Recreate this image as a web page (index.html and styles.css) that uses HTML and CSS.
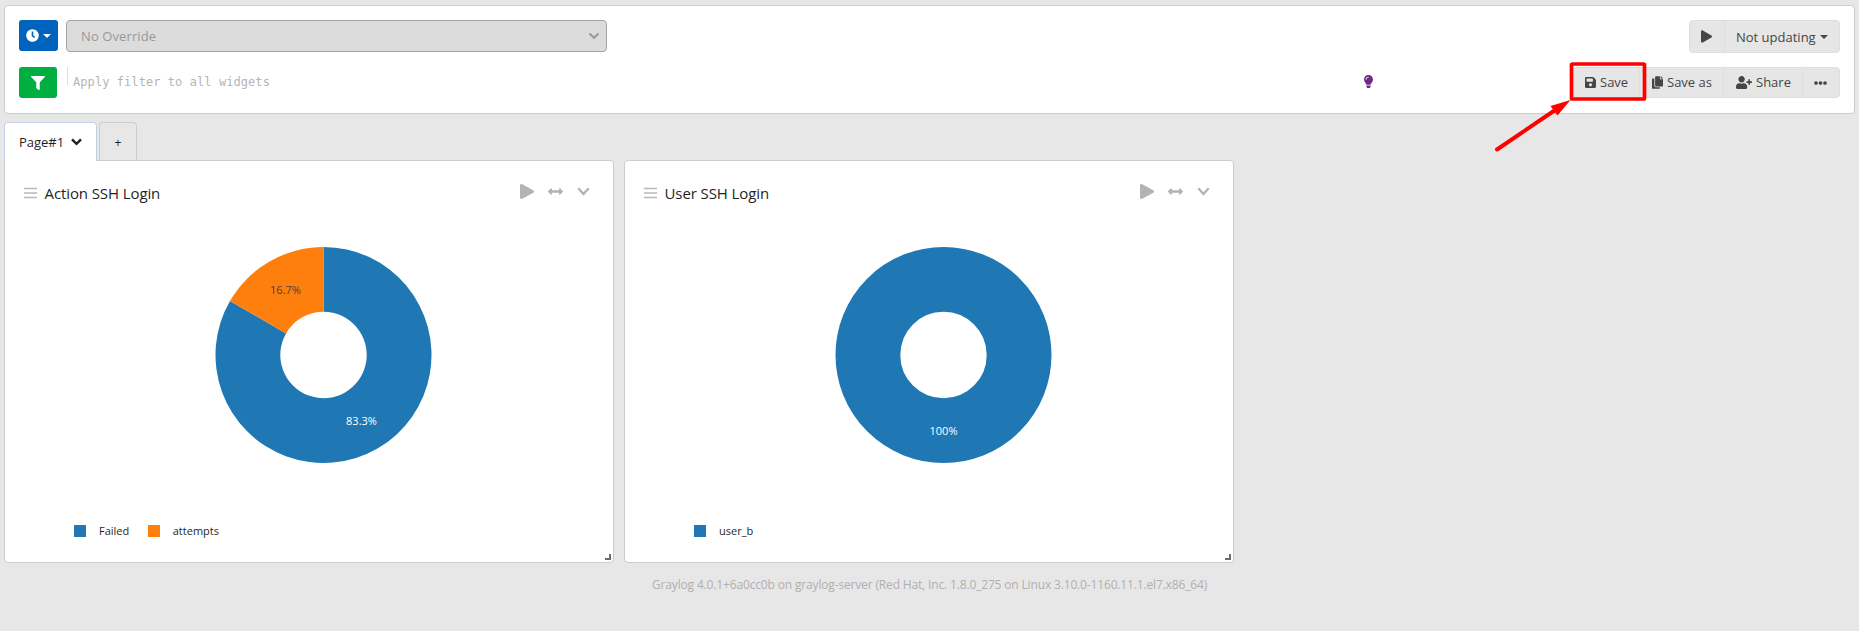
FILE: index.html
```html
<!DOCTYPE html>
<html lang="en">
<head>
<meta charset="utf-8">
<title>Graylog dashboard</title>
<link rel="stylesheet" href="styles.css">
</head>
<body>
<header class="toolbar">
  <div class="row">
    <button class="btn btn-time"><svg width="13" height="13" viewBox="0 0 512 512"><path fill="currentColor" d="M256,8C119,8,8,119,8,256S119,504,256,504,504,393,504,256,393,8,256,8Zm92.49,313h0l-20,25a16,16,0,0,1-22.49,2.5h0l-67-49.72a40,40,0,0,1-15-31.23V112a16,16,0,0,1,16-16h32a16,16,0,0,1,16,16V256l58,42.5A16,16,0,0,1,348.49,321Z"/></svg><span class="caret"></span></button>
    <div class="select"><span>No Override</span><svg width="12" height="8" viewBox="0 0 12 8"><path d="M1.5 1.5 6 5.8l4.500-4.300" fill="none" stroke="#999" stroke-width="2"/></svg></div>
    <div class="group group-refresh">
      <button class="seg seg-play"><svg width="11" height="13" viewBox="0 0 448 512"><path fill="currentColor" d="M424.4 214.7L72.4 6.6C43.8-10.3 0 6.1 0 47.9V464c0 37.5 40.7 60.1 72.4 41.3l352-208c31.4-18.5 31.5-64.1 0-82.6z"/></svg></button>
      <button class="seg seg-rate">Not updating<span class="caret"></span></button>
    </div>
  </div>
  <div class="row">
    <button class="btn btn-filter"><svg width="14" height="14" viewBox="0 0 512 512"><path fill="currentColor" d="M487.976 0H24.028C2.71 0-8.047 25.866 7.058 40.971L192 225.941V432c0 7.831 3.821 15.17 10.237 19.662l80 55.98C298.02 518.69 320 507.493 320 487.98V225.941l184.947-184.97C520.021 25.896 509.338 0 487.976 0z"/></svg></button>
    <div class="query"><span>Apply filter to all widgets</span></div>
    <svg class="bulb" width="9" height="13" viewBox="0 0 352 512"><path fill="#702785" d="M96.06 454.35c.01 6.29 1.87 12.45 5.36 17.69l17.09 25.69a31.99 31.99 0 0 0 26.64 14.28h61.71a31.99 31.99 0 0 0 26.64-14.28l17.09-25.69a31.989 31.989 0 0 0 5.36-17.69l.04-38.35H96.01l.05 38.35zM0 176c0 44.37 16.45 84.85 43.56 115.78 16.52 18.85 42.36 58.23 52.21 91.45.04.26.07.52.11.78h160.24c.04-.26.07-.51.11-.78 9.85-33.22 35.69-72.6 52.21-91.45C335.55 260.85 352 220.37 352 176 352 78.61 272.91-.3 175.45 0 73.44.31 0 82.97 0 176zm176-80c-44.11 0-80 35.89-80 80 0 8.84-7.16 16-16 16s-16-7.16-16-16c0-61.76 50.24-112 112-112 8.84 0 16 7.16 16 16s-7.16 16-16 16z"/></svg>
    <div class="group group-actions">
      <button class="seg seg-save"><svg width="11" height="13" viewBox="0 0 448 512"><path fill="currentColor" d="M433.941 129.941l-83.882-83.882A48 48 0 0 0 316.118 32H48C21.49 32 0 53.49 0 80v352c0 26.51 21.49 48 48 48h352c26.51 0 48-21.49 48-48V163.882a48 48 0 0 0-14.059-33.941zM224 416c-35.346 0-64-28.654-64-64 0-35.346 28.654-64 64-64s64 28.654 64 64c0 35.346-28.654 64-64 64zm96-304.52V212c0 6.627-5.373 12-12 12H76c-6.627 0-12-5.373-12-12V108c0-6.627 5.373-12 12-12h228.52c3.183 0 6.235 1.264 8.485 3.515l3.48 3.48A11.996 11.996 0 0 1 320 111.48z"/></svg><span>Save</span></button>
      <button class="seg seg-saveas"><svg width="11" height="13" viewBox="0 0 448 512"><path fill="currentColor" d="M320 448v40c0 13.255-10.745 24-24 24H24c-13.255 0-24-10.745-24-24V120c0-13.255 10.745-24 24-24h72v296c0 30.879 25.121 56 56 56h168zm0-344V0H152c-13.255 0-24 10.745-24 24v368c0 13.255 10.745 24 24 24h272c13.255 0 24-10.745 24-24V128H344c-13.2 0-24-10.800-24-24zm120.971-31.029L375.029 7.029A24 24 0 0 0 358.059 0H352v96h96v-6.059a24 24 0 0 0-7.029-16.97z"/></svg><span>Save as</span></button>
      <button class="seg seg-share"><svg width="16" height="13" viewBox="0 0 640 512"><path fill="currentColor" d="M624 208h-64v-64c0-8.800-7.200-16-16-16h-32c-8.800 0-16 7.200-16 16v64h-64c-8.800 0-16 7.200-16 16v32c0 8.800 7.200 16 16 16h64v64c0 8.800 7.200 16 16 16h32c8.800 0 16-7.200 16-16v-64h64c8.800 0 16-7.200 16-16v-32c0-8.800-7.200-16-16-16zm-400 48c70.700 0 128-57.300 128-128S294.700 0 224 0 96 57.300 96 128s57.300 128 128 128zm89.600 32h-16.700c-22.200 10.200-46.900 16-72.900 16s-50.600-5.800-72.900-16h-16.700C60.200 288 0 348.200 0 422.400V464c0 26.500 21.500 48 48 48h352c26.500 0 48-21.500 48-48v-41.600c0-74.200-60.200-134.400-134.400-134.400z"/></svg><span>Share</span></button>
      <button class="seg seg-more"><svg width="13" height="4" viewBox="0 0 13 4"><g fill="currentColor"><circle cx="2" cy="2" r="1.850"/><circle cx="6.500" cy="2" r="1.850"/><circle cx="11" cy="2" r="1.850"/></g></svg></button>
    </div>
  </div>
</header>

<nav class="tabs">
  <div class="tab tab-active">Page#1<svg width="11" height="8" viewBox="0 0 11 8"><path d="M1 1.300 5.500 5.800 10 1.300" fill="none" stroke="#1f1f1f" stroke-width="2.400"/></svg></div>
  <div class="tab tab-add">+</div>
</nav>

<main class="widgets">
  <section class="card">
    <div class="card-head">
      <svg class="drag" width="13" height="12" viewBox="0 0 13 12"><path d="M0 1.500h13M0 6h13M0 10.500h13" stroke="#b8b8b8" stroke-width="1.500"/></svg>
      <h2>Action SSH Login</h2>
      <div class="tools">
        <svg width="14" height="15" viewBox="0 0 448 512" preserveAspectRatio="none"><path fill="#b3b3b3" d="M424.400 214.700L72.400 6.600C43.800-10.300 0 6.100 0 47.900V464c0 37.500 40.700 60.100 72.400 41.300l352-208c31.400-18.500 31.500-64.100 0-82.600z"/></svg>
        <svg width="15" height="15" viewBox="0 0 512 512"><path fill="#b3b3b3" d="M377.941 169.941V216H134.059v-46.059c0-21.382-25.851-32.090-40.971-16.971L7.029 239.029c-9.373 9.373-9.373 24.568 0 33.941l86.059 86.059c15.119 15.119 40.971 4.411 40.971-16.971V296h243.882v46.059c0 21.382 25.851 32.090 40.971 16.971l86.059-86.059c9.373-9.373 9.373-24.568 0-33.941l-86.059-86.059c-15.119-15.120-40.971-4.412-40.971 16.970z"/></svg>
        <svg width="13" height="9" viewBox="0 0 13 9"><path d="M1.300 1.300 6.500 7 11.700 1.300" fill="none" stroke="#b3b3b3" stroke-width="2.300"/></svg>
      </div>
    </div>
    <svg class="chart" width="218" height="218" viewBox="-108.500 -109 218 218">
      <path fill="#1f77b4" d="M0-108A108 108 0 1 1-93.530-54L-37.410-21.600A43.200 43.200 0 1 0 0-43.200Z"/>
      <path fill="#ff7f0e" d="M0-108A108 108 0 0 0-93.530-54L-37.410-21.600A43.200 43.200 0 0 1 0-43.200Z"/>
      <text x="-38" y="-61" fill="#444">16.7%</text>
      <text class="on-dark" x="38" y="70">83.3%</text>
    </svg>
    <div class="legend">
      <span class="key key-blue">Failed</span>
      <span class="key key-orange">attempts</span>
    </div>
    <svg class="grip" width="6" height="6" viewBox="0 0 6 6"><path d="M5 0v5H0" fill="none" stroke="#6b6b6b" stroke-width="2"/></svg>
  </section>
  <section class="card">
    <div class="card-head">
      <svg class="drag" width="13" height="12" viewBox="0 0 13 12"><path d="M0 1.500h13M0 6h13M0 10.500h13" stroke="#b8b8b8" stroke-width="1.500"/></svg>
      <h2>User SSH Login</h2>
      <div class="tools">
        <svg width="14" height="15" viewBox="0 0 448 512" preserveAspectRatio="none"><path fill="#b3b3b3" d="M424.400 214.700L72.400 6.600C43.800-10.300 0 6.100 0 47.900V464c0 37.500 40.700 60.100 72.400 41.300l352-208c31.400-18.500 31.500-64.100 0-82.600z"/></svg>
        <svg width="15" height="15" viewBox="0 0 512 512"><path fill="#b3b3b3" d="M377.941 169.941V216H134.059v-46.059c0-21.382-25.851-32.090-40.971-16.971L7.029 239.029c-9.373 9.373-9.373 24.568 0 33.941l86.059 86.059c15.119 15.119 40.971 4.411 40.971-16.971V296h243.882v46.059c0 21.382 25.851 32.090 40.971 16.971l86.059-86.059c9.373-9.373 9.373-24.568 0-33.941l-86.059-86.059c-15.119-15.120-40.971-4.412-40.971 16.970z"/></svg>
        <svg width="13" height="9" viewBox="0 0 13 9"><path d="M1.300 1.300 6.500 7 11.700 1.300" fill="none" stroke="#b3b3b3" stroke-width="2.300"/></svg>
      </div>
    </div>
    <svg class="chart" width="218" height="218" viewBox="-108.500 -109 218 218">
      <circle r="75.600" fill="none" stroke="#1f77b4" stroke-width="64.800"/>
      <text class="on-dark" x="0" y="80">100%</text>
    </svg>
    <div class="legend">
      <span class="key key-blue">user_b</span>
    </div>
    <svg class="grip" width="6" height="6" viewBox="0 0 6 6"><path d="M5 0v5H0" fill="none" stroke="#6b6b6b" stroke-width="2"/></svg>
  </section>
</main>

<footer class="footer">Graylog 4.0.1+6a0cc0b on graylog-server (Red Hat, Inc. 1.8.0_275 on Linux 3.10.0-1160.11.1.el7.x86_64)</footer>

<svg class="callout" width="156" height="96" viewBox="1494 58 156 96">
  <rect x="1571.500" y="64" width="73" height="35" rx="1" fill="none" stroke="#f00" stroke-width="3.700"/>
  <path d="M1497 149.500 1556 109.500" stroke="#f00" stroke-width="4" stroke-linecap="round"/>
  <path d="M1570.500 100 1550.500 106 1557.500 115.500Z" fill="#f00"/>
</svg>
</body>
</html>
```
FILE: styles.css
```css
* { box-sizing: border-box; }

body {
  margin: 0;
  padding: 5px 4px 0;
  height: 631px;
  overflow: hidden;
  background: #e7e7e7;
  color: #1f1f1f;
  font: 13px/20px "Open Sans", sans-serif;
}

svg { display: block; flex: none; }

button {
  margin: 0;
  font: inherit;
  color: inherit;
}

.toolbar {
  display: flex;
  flex-direction: column;
  gap: 14px;
  height: 109px;
  padding: 14px;
  background: #fff;
  border: 1px solid #cdcdcd;
  border-radius: 4px;
}

.row { display: flex; align-items: flex-start; height: 33px; }

.caret {
  border: 4px solid transparent;
  border-top-color: currentColor;
  border-bottom: 0;
}

.btn {
  display: flex;
  align-items: center;
  justify-content: center;
  height: 31px;
  padding: 0;
  border: 0;
  border-radius: 3px;
  color: #fff;
}

.btn-time { width: 39px; gap: 4px; background: #0063be; }
.btn-filter { width: 38px; background: #00ae42; }

.select {
  display: flex;
  align-items: center;
  justify-content: space-between;
  width: 541px;
  height: 32px;
  margin-left: 8px;
  padding: 0 6px 0 14px;
  background: #dcdcdc;
  border: 1px solid #a3a3a3;
  border-radius: 4px;
  color: #999;
  letter-spacing: 0.1px;
}

.group {
  display: flex;
  margin-left: auto;
  background: #e6e6e6;
  border: 1px solid #dedede;
  border-radius: 4px;
  color: #454545;
}

.group-refresh { width: 151px; height: 33px; }
.group-actions { width: 268px; height: 31px; letter-spacing: -0.1px; }
.group-actions span { margin-top: -1px; }

.seg {
  display: flex;
  align-items: center;
  padding: 0 0 0 12px;
  background: none;
  border: 0;
  border-left: 1px solid #dedede;
  gap: 4px;
}

.seg:first-child { border-left: 0; }
.seg-play { width: 34px; padding-left: 11px; }
.seg-rate { flex: 1; padding-left: 11px; }
.seg-save { width: 66px; }
.seg-saveas { width: 84px; }
.seg-share { width: 79px; }
.seg-more { flex: 1; padding-left: 11px; }

.query {
  height: 18px;
  width: 1297px;
  margin-left: 10px;
  padding-left: 5px;
  border-left: 1px solid #ddd;
  color: #b5b5b5;
  font: 12px/30px "DejaVu Sans Mono", monospace;
  letter-spacing: 0.07px;
}

.bulb { margin-top: 8px; }

.tabs { display: flex; align-items: flex-end; gap: 2px; margin-top: 8px; height: 39px; }

.tab {
  display: flex;
  align-items: center;
  justify-content: center;
  height: 39px;
  border: 1px solid #cdcdcd;
  border-bottom: 0;
  border-radius: 4px 4px 0 0;
  color: #1f1f1f;
}

.tab-active {
  position: relative;
  z-index: 1;
  width: 93px;
  gap: 7px;
  background: #fff;
  border-color: #c6cfea;
}

.tab-active svg { margin-top: -1px; }
.tab-add { width: 38px; padding-top: 1px; font-size: 12px; }

.widgets { display: flex; gap: 10px; margin-top: -1px; }

.card {
  position: relative;
  display: flex;
  flex-direction: column;
  width: 610px;
  height: 403px;
  background: #fff;
  border: 1px solid #cdcdcd;
  border-radius: 4px;
}

.card:first-child { border-top-left-radius: 0; }

.card-head { display: flex; align-items: center; height: 64px; padding: 0 23px 0 19px; }
.card-head h2 { margin: 0 0 0 7.5px; font-size: 15px; font-weight: 400; letter-spacing: -0.1px; }
.tools { display: flex; align-items: center; gap: 14px; margin: -4px 0 0 auto; }

.chart { margin: 21px 0 0 210px; }
.chart text { font-size: 11px; text-anchor: middle; }
.chart .on-dark { fill: #fff; font-weight: 500; }

.legend { display: flex; gap: 18.5px; margin: 58px 0 0 69px; font-size: 11px; line-height: 18px; }
.key { display: flex; align-items: center; gap: 13px; }
.key::before { content: ""; width: 12px; height: 12px; background: #1f77b4; }
.key-orange::before { background: #ff7f0e; }

.grip { position: absolute; right: 2px; bottom: 2px; }

.footer { margin-top: 12px; color: #b0b0b0; font-size: 12px; letter-spacing: -0.155px; text-align: center; }

.callout { position: absolute; left: 1494px; top: 58px; }
```
